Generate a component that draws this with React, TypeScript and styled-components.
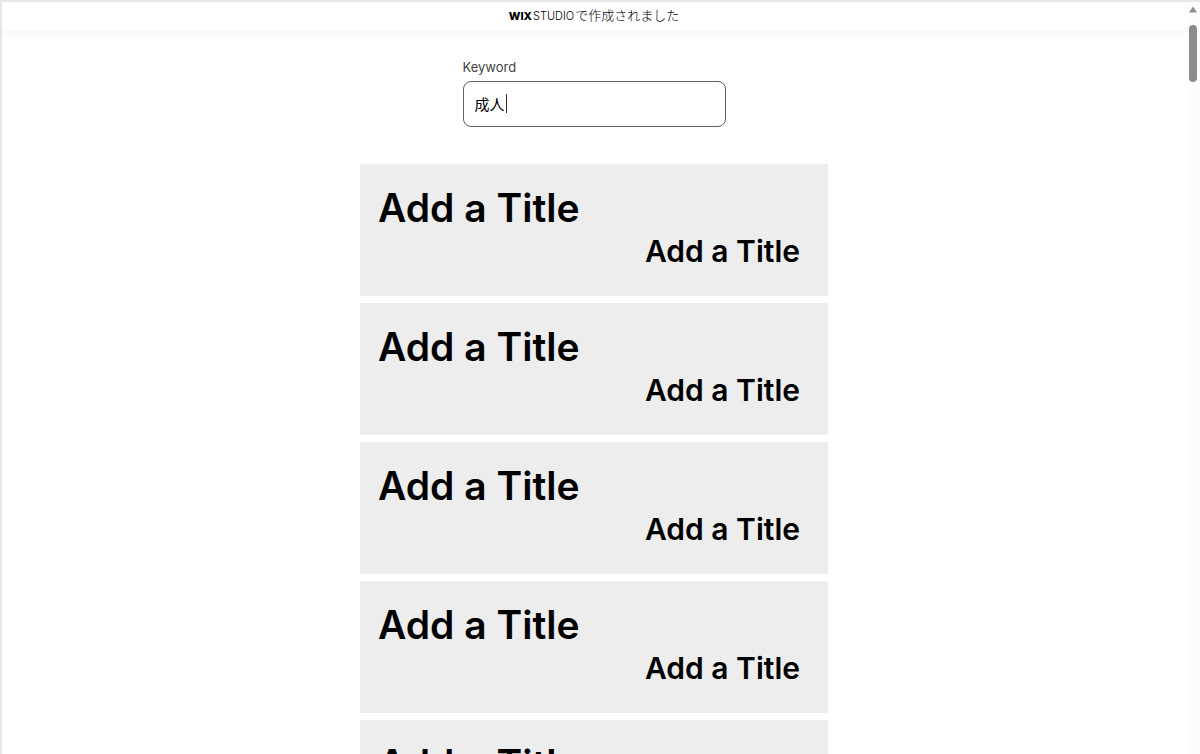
import React, { useState } from "react";
import styled, { createGlobalStyle } from "styled-components";

const GlobalStyle = createGlobalStyle`
  * { box-sizing: border-box; }
  body {
    margin: 0;
    background: #ffffff;
    color: #000000;
    font-family: Inter, "Noto Sans CJK JP", sans-serif;
  }
`;

const Frame = styled.div`
  display: flex;
  height: 100vh;
  overflow: hidden;
  border: solid #e6e5eb;
  border-width: 2px 0 0 2px;
`;

const Page = styled.div`
  flex: 1;
  min-width: 0;
  overflow: hidden;
`;

const Banner = styled.header`
  display: flex;
  align-items: center;
  justify-content: center;
  height: 28px;
  background: #ffffff;
  box-shadow: 0 4px 10px rgba(0, 0, 0, 0.04);
  font-size: 13px;
  line-height: 20px;
  white-space: nowrap;
`;

const BrandLink = styled.a`
  display: flex;
  align-items: center;
  color: #000000;
  text-decoration: none;
`;

const Brand = styled.span<{ $bold?: boolean }>`
  margin-right: 1px;
  font-size: 11px;
  font-weight: ${(p) => (p.$bold ? 800 : 300)};
`;

const BannerText = styled.span`
  padding-bottom: 2px;
  font-family: "Noto Sans CJK JP", sans-serif;
  font-weight: 300;
`;

const Main = styled.main`
  display: flex;
  flex-direction: column;
  align-items: center;
  gap: 37px;
  padding: 27px 16px 0;
`;

const Field = styled.div`
  display: flex;
  flex-direction: column;
  gap: 4px;
  width: 100%;
  max-width: 263px;
`;

const Label = styled.label`
  color: #444444;
  font-size: 13px;
  line-height: 20px;
`;

const InputBox = styled.div`
  position: relative;
`;

const Input = styled.input`
  display: block;
  width: 100%;
  height: 46px;
  padding: 0 11px 2px;
  border: 1px solid #606060;
  border-radius: 8px;
  outline: none;
  background: #ffffff;
  color: #000000;
  font-family: Inter, "Noto Sans CJK JP", sans-serif;
  font-size: 15px;
  font-weight: 400;
`;

const Caret = styled.span`
  position: absolute;
  top: 13px;
  left: 43px;
  width: 1px;
  height: 19px;
  background: #333333;
`;

const List = styled.ul`
  display: flex;
  flex-direction: column;
  gap: 7px;
  width: 100%;
  max-width: 468px;
  margin: 0;
  padding: 0;
  list-style: none;
`;

const Card = styled.li`
  display: flex;
  flex-direction: column;
  height: 132px;
  padding: 20px 28px 0 18px;
  background: #ededed;
`;

const Title = styled.h2`
  margin: 0;
  font-size: 39px;
  font-weight: 600;
  line-height: 48px;
`;

const Subtitle = styled.h3`
  align-self: flex-end;
  margin: 0;
  font-size: 30px;
  font-weight: 600;
  line-height: 38px;
`;

const ScrollTrack = styled.div`
  display: flex;
  flex-direction: column;
  align-items: center;
  gap: 12px;
  width: 14px;
  padding-top: 4px;
  background: #fcfcfc;
`;

const ScrollThumb = styled.div`
  width: 8px;
  height: 57px;
  border-radius: 4px;
  background: #8b8b8b;
`;

const cards = [1, 2, 3, 4, 5];

export default function App() {
  const [keyword, setKeyword] = useState("成人");

  return (
    <>
      <GlobalStyle />
      <Frame>
        <Page>
          <Banner>
            <BrandLink href="#">
              <Brand $bold>WIX</Brand>
              <Brand>STUDIO</Brand>
              <BannerText>で作成されました</BannerText>
            </BrandLink>
          </Banner>
          <Main>
            <Field>
              <Label htmlFor="keyword">Keyword</Label>
              <InputBox>
                <Input
                  id="keyword"
                  type="text"
                  value={keyword}
                  onChange={(e) => setKeyword(e.target.value)}
                />
                {keyword === "成人" && <Caret />}
              </InputBox>
            </Field>
            <List>
              {cards.map((id) => (
                <Card key={id}>
                  <Title>Add a Title</Title>
                  <Subtitle>Add a Title</Subtitle>
                </Card>
              ))}
            </List>
          </Main>
        </Page>
        <ScrollTrack aria-hidden="true">
          <svg width="8" height="7" viewBox="0 0 8 7">
            <path d="M4 0.5 L8 6.5 H0 Z" fill="#8b8b8b" />
          </svg>
          <ScrollThumb />
        </ScrollTrack>
      </Frame>
    </>
  );
}
